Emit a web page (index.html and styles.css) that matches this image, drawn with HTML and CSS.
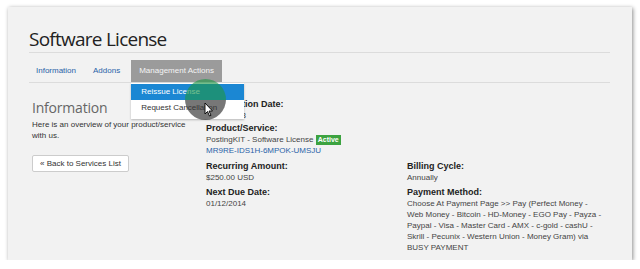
FILE: index.html
```html
<!DOCTYPE html>
<html>
<head>
<meta charset="utf-8">
<link rel="stylesheet" href="styles.css">
</head>
<body>
<div class="card">
  <h1 class="title">Software License</h1>
  <div class="tabs">
    <a class="tab">Information</a>
    <a class="tab">Addons</a>
    <div class="tab-wrap">
      <a class="tab active">Management Actions</a>
      <ul class="menu">
        <li class="item sel">Reissue License</li>
        <li class="item">Request Cancellation</li>
      </ul>
      <div class="click"><div class="click-top"></div><div class="click-bottom"></div></div>
      <svg class="cursor" width="10" height="15" viewBox="0 0 10 15"><path d="M1 1 L1 12 L3.5 9.5 L5.5 14 L7 13.3 L5 9 L8.5 9 Z" fill="#fff" stroke="#000" stroke-width="0.9"/></svg>
    </div>
  </div>
  <div class="content">
    <div class="col-left">
      <h2 class="sub">Information</h2>
      <p class="desc">Here is an overview of your product/service with us.</p>
      <button class="btn">« Back to Services List</button>
    </div>
    <div class="details">
      <div class="field f-reg">
        <div class="label">Registration Date:</div>
        <div class="val">01/12/2013</div>
      </div>
      <div class="field f-prod">
        <div class="label">Product/Service:</div>
        <div class="val">PostingKIT - Software License <span class="badge">Active</span></div>
        <div class="val link">MR9RE-IDS1H-6MPOK-UMSJU</div>
      </div>
      <div class="field f-rec">
        <div class="label">Recurring Amount:</div>
        <div class="val">$250.00 USD</div>
      </div>
      <div class="field f-bill">
        <div class="label">Billing Cycle:</div>
        <div class="val">Annually</div>
      </div>
      <div class="field f-due">
        <div class="label">Next Due Date:</div>
        <div class="val">01/12/2014</div>
      </div>
      <div class="field f-pay">
        <div class="label">Payment Method:</div>
        <div class="val">Choose At Payment Page &gt;&gt; Pay (Perfect Money - Web Money - Bitcoin - HD-Money - EGO Pay - Payza - Paypal - Visa - Master Card - AMX - c-gold - cashU - Skrill - Pecunix - Western Union - Money Gram) via BUSY PAYMENT</div>
      </div>
    </div>
  </div>
</div>
</body>
</html>
```

FILE: styles.css
```css
* { box-sizing: border-box; }
body { margin: 0; background: #fff; font-family: "Liberation Sans", Arial, sans-serif; }
.card {
  margin: 7px 8px 0 8px;
  height: 253px;
  background: #f2f2f2;
  box-shadow: 1px 1px 4px rgba(0,0,0,0.45);
  padding: 0 22px 0 21px;
}
.title {
  margin: 0;
  padding-top: 21px;
  height: 46px;
  font-family: "Open Sans", sans-serif;
  font-weight: 400;
  font-size: 19px;
  line-height: 23px;
  color: #222;
  letter-spacing: -0.75px;
  border-bottom: 1px solid #dcdcdc;
}
.tabs {
  display: flex;
  align-items: flex-end;
  height: 30px;
  border-bottom: 1px solid #dcdcdc;
}
.tab {
  display: block;
  font-size: 8px;
  line-height: 22px;
  color: #2a62a8;
  padding: 0 8px 0 7px;
  margin-right: 2px;
}
.tab + .tab-wrap { margin-left: 1px; }
.tab-wrap { position: relative; }
.tab.active {
  background: #9b9b9b;
  color: #f4f4f4;
  padding: 0 8px;
  margin-right: 0;
}
.menu {
  position: absolute;
  top: 23px;
  left: 0;
  width: 113px;
  margin: 0;
  padding: 1px 0 3px;
  list-style: none;
  background: #fff;
  box-shadow: 0 1px 2px rgba(0,0,0,0.25);
  z-index: 2;
}
.item {
  font-size: 8px;
  line-height: 16px;
  padding-left: 10px;
  color: #333;
}
.item.sel { background: #1b87d3; color: #fff; }
.click {
  position: absolute;
  left: 54px;
  top: 19px;
  width: 41px;
  height: 41px;
  border-radius: 50%;
  overflow: hidden;
  display: flex;
  flex-direction: column;
  z-index: 3;
}
.click-top { height: 21px; background: rgba(30,150,70,0.62); }
.click-bottom { flex: 1; background: rgba(55,55,55,0.68); }
.cursor { position: absolute; left: 73px; top: 42px; z-index: 4; }
.content {
  display: flex;
  padding-top: 16px;
  font-size: 8px;
  color: #444;
}
.col-left { width: 177px; padding-left: 3px; }
.sub {
  margin: 0;
  font-family: "Open Sans", sans-serif;
  font-weight: 400;
  font-size: 14px;
  line-height: 18px;
  color: #666;
  letter-spacing: -0.2px;
}
.desc { margin: 2px 0 0; max-width: 158px; line-height: 11px; color: #333; }
.btn {
  display: block;
  margin-top: 14px;
  font-family: "Liberation Sans", Arial, sans-serif;
  font-size: 8px;
  color: #333;
  background: #fff;
  border: 1px solid #ccc;
  border-radius: 2px;
  height: 17px;
  padding: 0 7px;
}
.details {
  display: grid;
  grid-template-columns: 201px 198px;
  grid-template-areas:
    "reg ."
    "prod ."
    "rec bill"
    "due pay";
  align-items: start;
}
.f-reg { grid-area: reg; }
.f-prod { grid-area: prod; margin-top: 2px; }
.f-rec { grid-area: rec; margin-top: 5px; }
.f-bill { grid-area: bill; margin-top: 5px; }
.f-due { grid-area: due; margin-top: 4px; }
.f-pay { grid-area: pay; margin-top: 4px; }
.label { font-weight: bold; font-size: 9px; line-height: 11px; color: #222; }
.val { line-height: 11px; }
.link { color: #2a62a8; }
.badge {
  display: inline-block;
  background: #3ca340;
  color: #fff;
  font-weight: bold;
  font-size: 7px;
  line-height: 10px;
  padding: 0 2px;
}
```
